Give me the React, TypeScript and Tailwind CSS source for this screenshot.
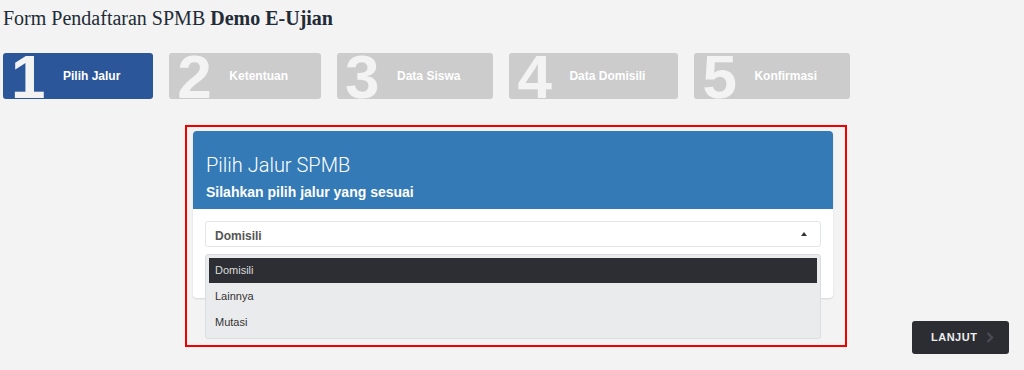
import React from "react";

const steps = [
  { n: "1", label: "Pilih Jalur", active: true },
  { n: "2", label: "Ketentuan", active: false },
  { n: "3", label: "Data Siswa", active: false },
  { n: "4", label: "Data Domisili", active: false },
  { n: "5", label: "Konfirmasi", active: false },
];

const options = ["Domisili", "Lainnya", "Mutasi"];

export default function App() {
  return (
    <div className="h-[370px] overflow-hidden bg-[#f3f3f3] px-[3px] pt-[4px] font-['Liberation_Sans',Arial,sans-serif]">
      {/* judul */}
      <h1 className="font-['Liberation_Serif','Times_New_Roman',serif] text-[20px] leading-[28px] text-[#222b36]">
        Form Pendaftaran SPMB <span className="font-bold">Demo E-Ujian</span>
      </h1>

      {/* langkah */}
      <div className="mt-[21px] flex gap-4">
        {steps.map((s) => (
          <StepBox key={s.n} n={s.n} label={s.label} active={s.active} />
        ))}
      </div>

      <div className="mt-[26px] flex h-[229px]">
        <div className="ml-[182px] h-[222px] w-[662px] shrink-0 self-start border-2 border-[#f20000] pl-[6px] pt-[4px]">
          <div className="relative w-[640px] rounded-[4px] bg-white shadow-[0_1px_2px_rgba(0,0,0,0.12)]">
            <div className="h-[78px] rounded-t-[4px] bg-[#337ab7] px-[13px] pt-[24px] text-white">
              <h2 className="font-['Roboto',sans-serif] text-[20px] font-light leading-[20px]">Pilih Jalur SPMB</h2>
              <p className="mt-[9px] text-[14px] font-bold leading-[16px]">Silahkan pilih jalur yang sesuai</p>
            </div>
            <div className="h-[89px] px-[12px] pt-[12px]">
              <div className="flex h-[26px] items-center justify-between rounded-[3px] border border-[#e3e5e8] bg-white pl-[9px] pr-[13px]">
                <span className="pt-[3px] text-[12px] font-bold text-[#555]">Domisili</span>
                <span className="h-0 w-0 border-x-[3px] border-b-[4px] border-x-transparent border-b-[#333]" />
              </div>
            </div>

            {/* daftar pilihan terbuka */}
            <div className="absolute left-[12px] right-[12px] top-[123px] rounded-[3px] border border-[#dcdde0] bg-[#eaebed] p-[3px]">
              {options.map((o, i) => (
                <div
                  key={o}
                  className={
                    i === 0
                      ? "flex h-[25px] items-center bg-[#2d2e33] px-[6px] text-[11px] text-[#dcdcdc]"
                      : "flex h-[26px] items-center px-[6px] text-[11px] text-[#333]"
                  }
                >
                  {o}
                </div>
              ))}
            </div>
          </div>
        </div>

        <button className="ml-auto mr-[12px] flex h-[33px] w-[97px] items-center self-end rounded-[3px] bg-[#2c2d32] pl-[19px] pr-[15px] text-[11px] font-bold tracking-[0.5px] text-[#eeeeee]">
          LANJUT
          <svg className="ml-auto" width="8" height="11" viewBox="0 0 8 11" fill="none">
            <path d="M1.5 1l4.5 4.5L1.5 10" stroke="#474b53" strokeWidth="2.4" />
          </svg>
        </button>
      </div>
    </div>
  );
}

function StepBox({ n, label, active }: { n: string; label: string; active: boolean }) {
  return (
    <div
      className={
        active
          ? "relative flex h-[46px] items-center overflow-hidden rounded-[3px] bg-[#2b579a] pl-[60px] pr-[33px] text-[12px] font-bold text-white"
          : "relative flex h-[46px] items-center overflow-hidden rounded-[3px] bg-[#cccccc] pl-[60px] pr-[33px] text-[12px] font-bold text-white"
      }
    >
      <span className="absolute left-[8px] top-[-7px] text-[62px] font-bold leading-none text-[#f3f3f3]">{n}</span>
      <span className="relative">{label}</span>
    </div>
  );
}
